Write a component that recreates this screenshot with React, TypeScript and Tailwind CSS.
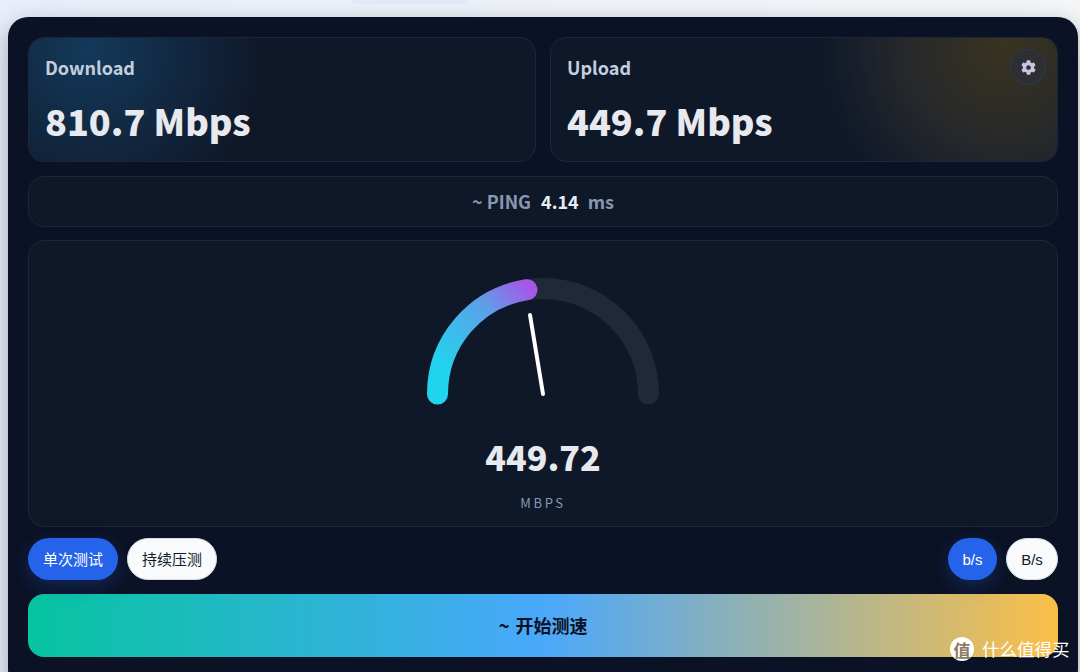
import { FaCog } from "react-icons/fa";

const cjk = "font-['Noto_Sans_CJK_SC','Noto_Sans',sans-serif]";

function StatCard({ label, value, glow, children }: { label: string; value: string; glow: string; children?: React.ReactNode }) {
  return (
    <div className={`relative h-[125px] flex-1 rounded-2xl border border-[#1c2739] px-4 pt-[14px] ${glow}`}>
      <div className="text-[18px] font-bold leading-[30px] text-[#c3cfdf]">{label}</div>
      <div className="mt-[15px] text-[36px] font-extrabold leading-[46px] text-[#e7e9ee]">{value}</div>
      {children}
    </div>
  );
}

function Gauge() {
  return (
    <svg width="260" height="140" viewBox="0 0 260 140" className="block">
      <defs>
        <linearGradient id="arc" gradientUnits="userSpaceOnUse" x1="24" y1="110" x2="124" y2="20">
          <stop offset="0" stopColor="#22d3ee" />
          <stop offset="0.12" stopColor="#22d3ee" />
          <stop offset="0.65" stopColor="#5d9fe8" />
          <stop offset="1" stopColor="#a855e8" />
        </linearGradient>
      </defs>
      <path d="M24.5 120 A105.5 105.5 0 0 1 235.5 120" fill="none" stroke="#1f2937" strokeWidth="21" strokeLinecap="round" />
      <path d="M24.5 120 A105.5 105.5 0 0 1 114 15.7" fill="none" stroke="url(#arc)" strokeWidth="21" strokeLinecap="round" />
      <line x1="130" y1="120" x2="117" y2="41" stroke="#ffffff" strokeWidth="4" strokeLinecap="round" />
    </svg>
  );
}

function Pill({ active, className, children }: { active?: boolean; className: string; children: React.ReactNode }) {
  return (
    <button
      className={`flex h-[42px] items-center justify-center rounded-[21px] pt-[3px] text-[15px] ${
        active
          ? "bg-[#2563eb] text-white shadow-[0_6px_18px_rgba(37,99,235,0.25)]"
          : "border border-[#d7dbe2] bg-[#f8fafc] text-[#111827]"
      } ${className}`}
    >
      {children}
    </button>
  );
}

export default function App() {
  return (
    <div className={`relative h-[672px] w-[1080px] overflow-hidden bg-gradient-to-r from-[#e9effa] to-[#f5f6f8] ${cjk}`}>
      <div className="absolute left-[352px] top-0 h-[4px] w-[116px] rounded-b-lg bg-[#e0e8fa]" />
      <div className="ml-2 mt-[17px] h-[672px] w-[1070px] rounded-[20px] bg-[#0b1225] p-5 shadow-[0_8px_24px_rgba(15,23,42,0.35)]">
        <div className="flex gap-[14px]">
          <StatCard
            label="Download"
            value="810.7 Mbps"
            glow="bg-[#0f1829] bg-[radial-gradient(circle_at_12%_10%,#14395a_0%,transparent_38%)]"
          />
          <StatCard
            label="Upload"
            value="449.7 Mbps"
            glow="bg-[#0f1829] bg-[radial-gradient(circle_at_90%_5%,#39331f_0%,#26282b_22%,transparent_40%)]"
          >
            <button className="absolute right-[11px] top-[11px] flex h-9 w-9 items-center justify-center rounded-full border border-[#2f3a4c] bg-[#2e2f33]">
              <FaCog className="text-[15px] text-[#cdc3e2]" />
            </button>
          </StatCard>
        </div>

        <div className="mt-[14px] flex h-[51px] items-center justify-center rounded-2xl border border-[#1c2739] bg-[#0f1829] text-[18px] font-bold text-[#8798b0]">
          <span>~ PING</span>
          <span className="ml-[10px] text-[#e8edf4]">4.14</span>
          <span className="ml-[9px]">ms</span>
        </div>

        <div className="mt-[13px] flex h-[287px] flex-col items-center rounded-2xl border border-[#1c2739] bg-[#0f1829] pt-[33px]">
          <Gauge />
          <div className="mt-[21px] text-[34px] font-extrabold leading-[44px] text-[#e7e9ee]">449.72</div>
          <div className="mt-[15px] text-[13px] leading-[18px] tracking-[0.2em] text-[#8798b0]">MBPS</div>
        </div>

        <div className="mt-[11px] flex items-center font-['Liberation_Sans','Noto_Sans_CJK_SC',sans-serif]">
          <Pill active className="w-[90px]">单次测试</Pill>
          <Pill className="ml-[9px] w-[90px]">持续压测</Pill>
          <Pill active className="ml-auto w-[49px]">b/s</Pill>
          <Pill className="ml-[9px] w-[52px]">B/s</Pill>
        </div>

        <button className="mt-[14px] flex h-[63px] w-full items-center justify-center rounded-2xl bg-[linear-gradient(90deg,#06c4a0_0%,#4aa8fb_50%,#fbbf47_100%)] text-[18px] font-bold text-[#0b1225]">
          <span className="mr-[6px] text-[19px]">~</span>开始测速
        </button>
      </div>

      <div className="absolute left-[950px] top-[637px] flex items-center">
        <div className="flex h-6 w-6 items-center justify-center rounded-full bg-white text-[17px] font-bold leading-none text-[#8a7a5c]">值</div>
        <span className="ml-2 text-[17.5px] leading-6 text-white">什么值得买</span>
      </div>
    </div>
  );
}
